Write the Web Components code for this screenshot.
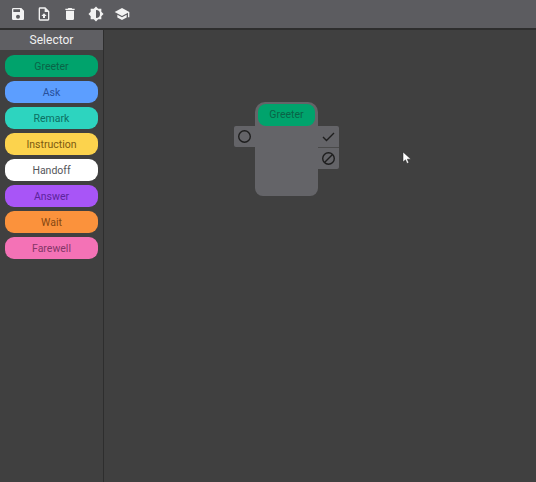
<!DOCTYPE html>
<html>
<head>
<meta charset="utf-8">
<title>Flow editor</title>
<style>
  html, body { margin: 0; height: 100%; background: #404040; }
  body { font-family: Roboto, "Liberation Sans", sans-serif; overflow: hidden; }
</style>
</head>
<body>
<flow-editor>
  <tool-bar slot="top"></tool-bar>
  <node-selector slot="side">
    <node-chip color="#00a36c" ink="#0a6347">Greeter</node-chip>
    <node-chip color="#5c9eff" ink="#27509c">Ask</node-chip>
    <node-chip color="#2dd4bf" ink="#0c6f62">Remark</node-chip>
    <node-chip color="#fcd34d" ink="#7c5a10">Instruction</node-chip>
    <node-chip color="#ffffff" ink="#55555a">Handoff</node-chip>
    <node-chip color="#a855f7" ink="#5c249c">Answer</node-chip>
    <node-chip color="#fb923c" ink="#854712">Wait</node-chip>
    <node-chip color="#f472b6" ink="#843668">Farewell</node-chip>
  </node-selector>
  <flow-canvas slot="main">
    <flow-node style="left:151px;top:72px" title="Greeter"></flow-node>
    <svg class="cursor" slot="overlay" style="position:absolute;left:298px;top:121px" width="10" height="14" viewBox="0 0 10 14">
      <path d="M1 1v10l2.500-2.200L5 12.500l1.800-.8-1.500-3.500H9z" fill="#fff" stroke="#222" stroke-width=".5"/>
    </svg>
  </flow-canvas>
</flow-editor>

<script>
class FlowEditor extends HTMLElement {
  constructor() {
    super();
    this.shadow = this.attachShadow({mode: 'open'});
    this.shadow.innerHTML = `
      <style>
        :host { display: flex; flex-direction: column; width: 536px; height: 482px; }
        .body { display: flex; flex: 1; min-height: 0; }
      </style>
      <slot name="top"></slot>
      <div class="body">
        <slot name="side"></slot>
        <slot name="main"></slot>
      </div>`;
  }
}

class ToolBar extends HTMLElement {
  constructor() {
    super();
    this.shadow = this.attachShadow({mode: 'open'});
    this.shadow.innerHTML = `
      <style>
        :host {
          display: flex; align-items: center; gap: 10px;
          height: 28px; padding: 0 0 0 10px; box-sizing: content-box;
          background: #5c5c60; border-bottom: 2px solid #2e2e2e;
        }
        svg { width: 16px; height: 16px; fill: #f2f2f2; display: block; flex: none; }
      </style>
      <svg viewBox="0 0 24 24"><path d="M17 3H5a2 2 0 0 0-2 2v14a2 2 0 0 0 2 2h14a2 2 0 0 0 2-2V7l-4-4zm-5 16a3 3 0 1 1 0-6 3 3 0 0 1 0 6zm3-10H5V5h10v4z"/></svg>
      <svg viewBox="0 0 24 24"><path d="M14 2H6a2 2 0 0 0-2 2v16a2 2 0 0 0 2 2h12a2 2 0 0 0 2-2V8l-6-6zm4 18H6V4h7v5h5v11zM8 15h2.500v3h3v-3H16l-4-4z"/></svg>
      <svg viewBox="0 0 24 24"><path d="M6 19a2 2 0 0 0 2 2h8a2 2 0 0 0 2-2V7H6v12zM19 4h-3.500l-1-1h-5l-1 1H5v2h14V4z"/></svg>
      <svg viewBox="0 0 24 24"><path d="M20 15.310 23.310 12 20 8.690V4h-4.690L12 .69 8.690 4H4v4.690L.69 12 4 15.310V20h4.690L12 23.310 15.310 20H20v-4.690zM12 18V6a6 6 0 0 1 0 12z"/></svg>
      <svg viewBox="0 0 24 24"><path d="M5 13.180v4L12 21l7-3.820v-4L12 17l-7-3.820zM12 3 1 9l11 6 9-4.910V17h2V9L12 3z"/></svg>`;
  }
}

class NodeSelector extends HTMLElement {
  constructor() {
    super();
    this.shadow = this.attachShadow({mode: 'open'});
    this.shadow.innerHTML = `
      <style>
        :host {
          display: flex; flex-direction: column; flex: none;
          width: 103px; background: #404040; border-right: 1px solid #2e2e2e;
        }
        .title {
          height: 20px; line-height: 20px; text-align: center;
          background: #5f5f63; color: #f0f0f0; font-size: 12px;
        }
        .list { display: flex; flex-direction: column; gap: 4px; padding: 5px 5px 0 5px; }
      </style>
      <div class="title">Selector</div>
      <div class="list"><slot></slot></div>`;
  }
}

class NodeChip extends HTMLElement {
  constructor() {
    super();
    this.shadow = this.attachShadow({mode: 'open'});
    this.shadow.innerHTML = `
      <style>
        :host {
          display: flex; align-items: center; justify-content: center;
          height: 22px; border-radius: 9px; font-size: 10.5px;
          background: var(--chip); color: var(--ink);
        }
      </style>
      <slot></slot>`;
  }

  connectedCallback() {
    this.style.setProperty('--chip', this.getAttribute('color'));
    this.style.setProperty('--ink', this.getAttribute('ink'));
    this.style.width = '93px';
  }
}

class FlowCanvas extends HTMLElement {
  constructor() {
    super();
    this.shadow = this.attachShadow({mode: 'open'});
    this.shadow.innerHTML = `
      <style>
        :host { display: block; position: relative; flex: 1; background: #404040; }
      </style>
      <slot></slot>
      <slot name="overlay"></slot>`;
  }
}

class FlowNode extends HTMLElement {
  constructor() {
    super();
    this.shadow = this.attachShadow({mode: 'open'});
  }

  connectedCallback() {
    this.render();
  }

  render() {
    this.shadow.innerHTML = `
      <style>
        :host { display: block; position: absolute; width: 63px; height: 94px; }
        .box {
          box-sizing: border-box; width: 63px; height: 94px; padding: 2px 3px;
          background: #646468; border-radius: 10px 10px 8px 8px;
        }
        .head {
          height: 22px; line-height: 22px; text-align: center; border-radius: 8px;
          background: #00a36c; color: #0a6347; font-size: 10.500px;
        }
        .port {
          position: absolute; width: 21px; height: 21px; background: #646468;
          display: flex; align-items: center; justify-content: center;
          border-radius: 2px;
        }
        .in { left: -21px; top: 24px; border-radius: 2px 0 0 2px; }
        .ok { left: 63px; top: 24px; border-radius: 0 2px 0 0; border-bottom: 1px solid #4a4a4a; }
        .no { left: 63px; top: 46px; border-radius: 0 0 2px 0; }
        svg { display: block; fill: none; stroke: #1e1e1e; }
      </style>
      <div class="box"><div class="head">${this.getAttribute('title')}</div></div>
      <div class="port in"><svg width="15" height="15" viewBox="0 0 15 15"><circle cx="7.500" cy="7.500" r="5.800" stroke-width="1.400"/></svg></div>
      <div class="port ok"><svg width="15" height="15" viewBox="0 0 15 15"><path d="M2 8l3.500 3.500L13 4" stroke-width="1.400"/></svg></div>
      <div class="port no"><svg width="15" height="15" viewBox="0 0 15 15"><circle cx="7.500" cy="7.500" r="5.800" stroke-width="1.400"/><path d="M3.500 11.500l8-8" stroke-width="1.400"/></svg></div>`;
  }
}

customElements.define('flow-editor', FlowEditor);
customElements.define('tool-bar', ToolBar);
customElements.define('node-selector', NodeSelector);
customElements.define('node-chip', NodeChip);
customElements.define('flow-canvas', FlowCanvas);
customElements.define('flow-node', FlowNode);
</script>
</body>
</html>
